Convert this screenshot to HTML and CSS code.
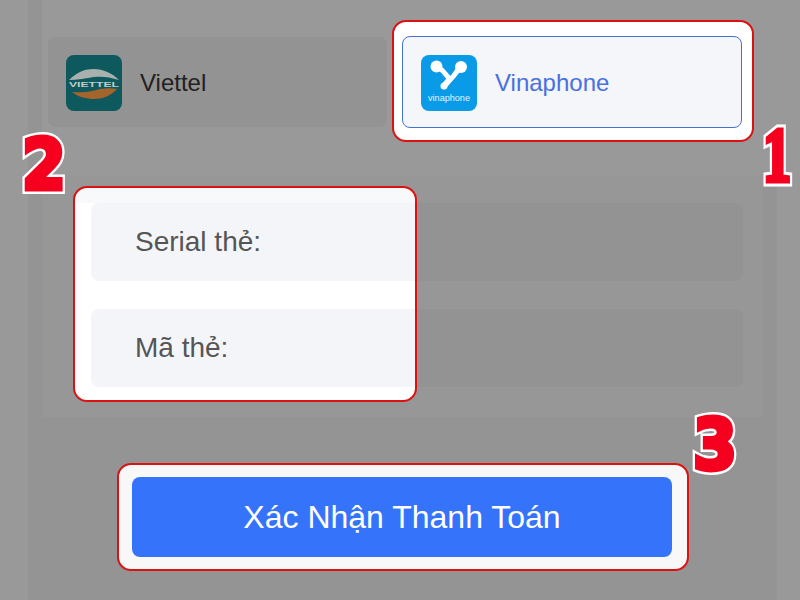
FILE: index.html
```html
<!DOCTYPE html>
<html lang="vi">
<head>
<meta charset="utf-8">
<title>Xác Nhận Thanh Toán</title>
<link rel="stylesheet" href="styles.css">
</head>
<body>
<main class="sheet">
  <section class="carriers">
    <div class="carrier">
      <svg class="logo" viewBox="0 0 56 56">
        <rect width="56" height="56" rx="8" fill="#0e595d"/>
        <path d="M3 25C11 17 19 14 28 14C37 14 46 18 53 25C44 22 36 21 28 22C20 23 11 25 3 25Z" fill="#a9b1ae"/>
        <path d="M6 37C20 38 27 36 34 34C41 33 46 33 51 34C45 41 36 44 28 44C21 44 12 42 6 37Z" fill="#a4642c"/>
        <text class="viettel-mark" x="28" y="32" textLength="50" lengthAdjust="spacingAndGlyphs">VIETTEL</text>
      </svg>
      <span class="carrier-name">Viettel</span>
    </div>
    <div class="highlight highlight-carrier">
      <div class="carrier carrier-active">
        <svg class="logo" viewBox="0 0 56 56">
          <rect width="56" height="56" rx="8" fill="#0a9be8"/>
          <path d="M15 12C22 13 24 20 29 24C33 23 34 16 40 13" fill="none" stroke="#fff" stroke-width="5" stroke-linecap="round"/>
          <path d="M29 24L23 31" fill="none" stroke="#fff" stroke-width="6" stroke-linecap="round"/>
          <circle cx="15.500" cy="11.500" r="6" fill="#fff"/>
          <circle cx="40" cy="12" r="6" fill="#fff"/>
          <circle cx="23" cy="31" r="3.500" fill="#fff"/>
          <text class="vina-mark" x="28" y="46" textLength="42" lengthAdjust="spacingAndGlyphs">vinaphone</text>
        </svg>
        <span class="carrier-name">Vinaphone</span>
      </div>
    </div>
  </section>

  <section class="form-panel">
    <div class="field-dim"></div>
    <div class="field-dim"></div>
    <div class="highlight highlight-fields">
      <div class="field">Serial thẻ:</div>
      <div class="field">Mã thẻ:</div>
    </div>
  </section>

  <div class="highlight highlight-submit">
    <button class="submit" type="button">Xác Nhận Thanh Toán</button>
  </div>
</main>

<span class="step step-1" data-n="1">1</span>
<span class="step step-2" data-n="2">2</span>
<span class="step step-3" data-n="3">3</span>
</body>
</html>
```

FILE: styles.css
```css
* { box-sizing: border-box; }

html, body {
  margin: 0;
  height: 600px;
  overflow: hidden;
}

body {
  position: relative;
  background: #999999;
  font-family: "Liberation Sans", Arial, sans-serif;
}

.sheet {
  margin-left: 28px;
  width: 749px;
  height: 600px;
  padding: 0 14px;
  background: #949494;
}

.carriers {
  display: grid;
  grid-template-columns: 339px 340px;
  column-gap: 15px;
  align-items: center;
  height: 175px;
  margin: 0 -14px 0 0;
  padding: 37px 35px 48px 6px;
  background: #999999;
}

.carrier {
  display: flex;
  align-items: center;
  gap: 18px;
  height: 90px;
  padding: 2px 0 0 18px;
  border-radius: 8px;
  background: #939393;
  font-size: 24px;
  color: #212121;
}

.logo {
  width: 56px;
  height: 56px;
  flex: none;
}

.viettel-mark {
  font: bold 6.5px "Liberation Sans", sans-serif;
  fill: #c4ccc9;
  text-anchor: middle;
}

.vina-mark {
  font: 8.500px "Liberation Sans", sans-serif;
  fill: #e4f4fd;
  text-anchor: middle;
}

.highlight {
  border: 2px solid #dc1212;
  border-radius: 14px;
}

.highlight-carrier {
  position: relative;
  margin: -17px -12px -15px -10px;
  padding: 14px 10px 12px 8px;
  background: #ffffff;
}

.carrier-active {
  height: 92px;
  border: 1px solid #4472cf;
  background: #f4f6fa;
  color: #4a6fe0;
}

.form-panel {
  position: relative;
  display: flex;
  flex-direction: column;
  gap: 28px;
  height: 242px;
  padding: 28px 20px 30px 49px;
  background: #979797;
}

.field-dim {
  height: 78px;
  border-radius: 8px;
  background: #939393;
}

.highlight-fields {
  position: absolute;
  left: 31px;
  top: 11px;
  display: flex;
  flex-direction: column;
  gap: 28px;
  width: 344px;
  height: 216px;
  padding: 15px 0 0 16px;
  overflow: hidden;
  background: linear-gradient(#f8f9fa 15px, #ffffff 15px);
}

.field {
  display: flex;
  align-items: center;
  height: 78px;
  flex: none;
  padding-left: 44px;
  border-radius: 8px 0 0 8px;
  background: #f4f5f8;
  font-size: 28px;
  color: #555555;
}

.highlight-submit {
  width: 572px;
  margin: 46px 0 0 75px;
  padding: 12px 15px 12px 13px;
  background: #f8f8f9;
}

.submit {
  display: block;
  width: 540px;
  height: 80px;
  padding: 0;
  border: 0;
  border-radius: 8px;
  background: #3574fa;
  font: 32px "Liberation Sans", Arial, sans-serif;
  color: #ffffff;
}

.step {
  position: absolute;
  font-family: "DejaVu Sans", sans-serif;
  font-weight: bold;
  line-height: 1;
  color: #f5001e;
  -webkit-text-stroke: 5px #f5001e;
  transform: scaleX(0.9);
  transform-origin: left top;
  z-index: 0;
}

.step::before {
  content: attr(data-n);
  position: absolute;
  left: 0;
  top: 0;
  z-index: -1;
  -webkit-text-stroke: 10px #ffffff;
}

.step-1 {
  left: 763px;
  top: 116px;
  font-family: "Liberation Serif", serif;
  font-size: 78px;
  transform: scaleX(0.72);
  -webkit-text-stroke-width: 5px;
}

.step-1::before {
  -webkit-text-stroke-width: 11px;
}

.step-2 {
  left: 22px;
  top: 130px;
  font-size: 70px;
}

.step-3 {
  left: 693px;
  top: 410px;
  font-size: 70px;
}
```
